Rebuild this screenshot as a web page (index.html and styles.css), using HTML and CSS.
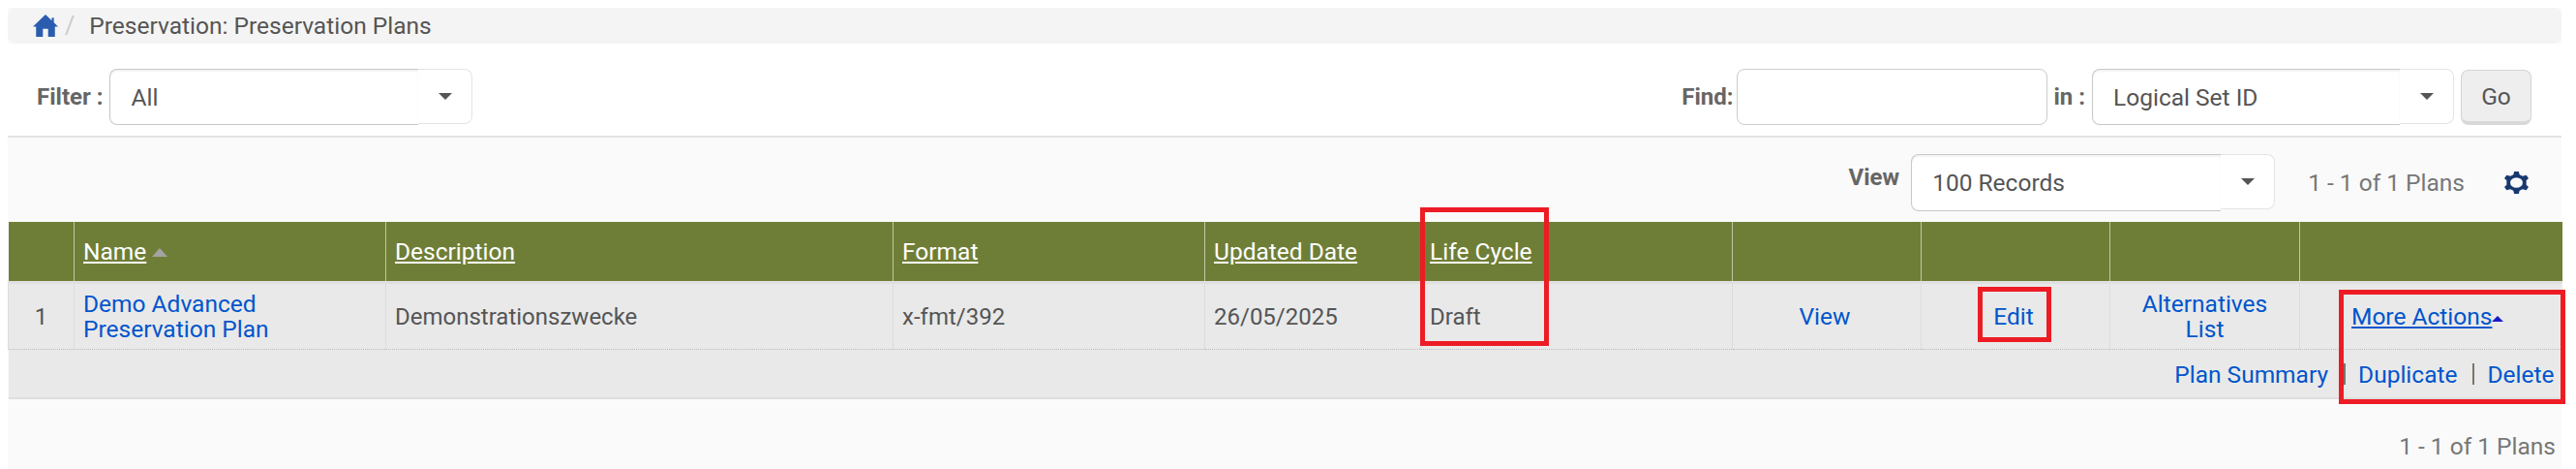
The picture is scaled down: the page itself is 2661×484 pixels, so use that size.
FILE: index.html
```html
<!DOCTYPE html>
<html lang="en">
<head>
  <meta charset="UTF-8" />
  <title>Preservation Plans</title>
  <link rel="stylesheet" href="styles.css">
</head>
<body>
  <div class="page">
    <div class="breadcrumb">
      <svg class="home-icon" viewBox="1 1 24 22" preserveAspectRatio="none"><path d="M13 1 L1 13 L4 13 L4 23 L10.5 23 L10.5 15 L15.5 15 L15.5 23 L22 23 L22 13 L25 13 L21 9 L21 4 L19 4 L19 7 Z"/></svg>
      <span class="crumb-sep">/</span>
      <span class="crumb-text">Preservation: Preservation Plans</span>
    </div>

    <div class="filter-bar">
      <label class="bar-label filter-label">Filter :</label>
      <div class="select select-filter">
        <div class="select-value">All</div>
        <div class="select-caret"><span class="caret"></span></div>
      </div>
      <div class="spacer"></div>
      <label class="bar-label">Find:</label>
      <input class="find-input" type="text" />
      <label class="bar-label in-label">in :</label>
      <div class="select select-in">
        <div class="select-value">Logical Set ID</div>
        <div class="select-caret"><span class="caret"></span></div>
      </div>
      <button class="go-btn">Go</button>
    </div>

    <div class="view-bar">
      <label class="bar-label view-label">View</label>
      <div class="select select-view">
        <div class="select-value">100 Records</div>
        <div class="select-caret"><span class="caret"></span></div>
      </div>
      <span class="count">1 - 1 of 1 Plans</span>
      <svg class="gear-icon" viewBox="1.4 0 21.2 24" preserveAspectRatio="none"><path fill-rule="evenodd" d="M10 0 H14 L14.7 3.4 L17.3 4.9 L20.6 3.8 L22.6 7.2 L20.6 9.6 V14.4 L22.6 16.8 L20.6 20.2 L17.3 19.1 L14.7 20.6 L14 24 H10 L9.3 20.6 L6.7 19.1 L3.4 20.2 L1.4 16.8 L3.4 14.4 V9.6 L1.4 7.2 L3.4 3.8 L6.7 4.9 L9.3 3.4 Z M12 6.5 A5.5 5.5 0 1 0 12 17.5 A5.5 5.5 0 1 0 12 6.5 Z"/></svg>
    </div>

    <table class="plans">
      <colgroup>
        <col class="c-num"><col class="c-name"><col class="c-desc"><col class="c-format"><col class="c-date"><col class="c-life"><col class="c-view"><col class="c-edit"><col class="c-alt"><col class="c-more">
      </colgroup>
      <thead>
        <tr>
          <th></th>
          <th><a href="#">Name</a><span class="sort-up"></span></th>
          <th><a href="#">Description</a></th>
          <th><a href="#">Format</a></th>
          <th><a href="#">Updated Date</a></th>
          <th><a href="#">Life Cycle</a></th>
          <th></th>
          <th></th>
          <th></th>
          <th></th>
        </tr>
      </thead>
      <tbody>
        <tr class="main-row">
          <td class="num">1</td>
          <td><a href="#">Demo Advanced Preservation Plan</a></td>
          <td>Demonstrationszwecke</td>
          <td>x-fmt/392</td>
          <td>26/05/2025</td>
          <td>Draft</td>
          <td class="center"><a href="#">View</a></td>
          <td class="center"><a href="#">Edit</a></td>
          <td class="alt-cell"><a href="#">Alternatives List</a></td>
          <td class="more-cell"><a class="more-link" href="#">More Actions</a><span class="more-arrow"></span></td>
        </tr>
        <tr class="actions-row">
          <td colspan="10">
            <div class="actions">
              <a href="#">Plan Summary</a>
              <span class="action-sep"></span>
              <a href="#">Duplicate</a>
              <span class="action-sep"></span>
              <a href="#">Delete</a>
            </div>
          </td>
        </tr>
      </tbody>
    </table>

    <div class="footer-count">1 - 1 of 1 Plans</div>

    <div class="mark mark-life"></div>
    <div class="mark mark-edit"></div>
    <div class="mark mark-more"></div>
  </div>
</body>
</html>
```

FILE: styles.css
```css
* {
  box-sizing: border-box;
}
html, body {
  margin: 0;
  background: #fff;
}
body {
  font-family: Roboto, Arial, sans-serif;
  font-size: 24px;
  color: #555;
  height: 484px;
  overflow: hidden;
}
a {
  color: #0055cc;
  text-decoration: none;
}
.page {
  position: relative;
  margin: 8px 15px 0 8px;
  height: 476px;
  background: #fafafa;
}

/* breadcrumb */
.breadcrumb {
  display: flex;
  align-items: center;
  height: 37px;
  padding-left: 26px;
  background: #f4f4f4;
  border-radius: 8px;
}
.home-icon {
  width: 26px;
  height: 23px;
  fill: #2a5db0;
}
.crumb-sep {
  margin-left: 7px;
  font-size: 25px;
  color: #ccc;
}
.crumb-text {
  margin-left: 15px;
  font-size: 24.5px;
  color: #555;
}

/* filter row */
.filter-bar {
  display: flex;
  align-items: flex-start;
  height: 97px;
  padding: 26px 31px 0 30px;
  background: #fff;
  border-bottom: 2px solid #e2e2e2;
}
.spacer {
  flex: 1;
}
.bar-label {
  font-weight: 700;
  font-size: 24px;
  line-height: 58px;
  color: #666;
  white-space: nowrap;
}
.filter-label {
  margin-right: 7px;
}
.in-label {
  margin: 0 7px 0 6px;
}
.select {
  display: flex;
  height: 58px;
}
.select-filter {
  width: 375px;
}
.select-in {
  width: 374px;
}
.select-view {
  width: 376px;
  height: 59px;
}
.select-value {
  flex: 1;
  padding: 0 21px;
  font-size: 24.5px;
  line-height: 58px;
  background: #fff;
  border: 1px solid #c8c8c8;
  border-right: 0;
  border-radius: 8px 0 0 8px;
  color: #555;
  box-shadow: inset 0 2px 2px rgba(0,0,0,0.05);
}
.select-caret {
  display: flex;
  align-items: center;
  justify-content: center;
  width: 56px;
  height: 57px;
  background: #fff;
  border: 1px solid #e4e4e4;
  border-left: 0;
  border-radius: 0 8px 8px 0;
}
.caret {
  width: 0;
  height: 0;
  border-left: 7px solid transparent;
  border-right: 7px solid transparent;
  border-top: 7px solid #555;
}
.find-input {
  width: 321px;
  height: 58px;
  margin-left: 4px;
  border: 1px solid #ccc;
  border-radius: 8px;
  background: #fff;
}
.go-btn {
  width: 73px;
  height: 57px;
  margin: 1px 0 0 7px;
  font-family: inherit;
  font-size: 24.5px;
  color: #555;
  background: #eee;
  border: 1px solid #d4d4d4;
  border-bottom: 4px solid #d8d8d8;
  border-radius: 8px;
}

/* view row */
.view-bar {
  display: flex;
  align-items: flex-start;
  height: 87px;
  padding: 17px 34px 0 0;
  justify-content: flex-end;
}
.view-label {
  margin-right: 12px;
  line-height: 48px;
}
.count {
  margin-left: 34px;
  font-size: 24.5px;
  line-height: 60px;
  color: #777;
}
.gear-icon {
  width: 25px;
  height: 23px;
  margin: 18px 0 0 41px;
  fill: #17396f;
}

/* table */
.plans {
  width: 100%;
  table-layout: fixed;
  border-collapse: collapse;
}
.c-num { width: 68px; }
.c-name { width: 322px; }
.c-desc { width: 524px; }
.c-format { width: 322px; }
.c-date { width: 223px; }
.c-life { width: 322px; }
.c-view { width: 195px; }
.c-edit { width: 195px; }
.c-alt { width: 196px; }
.c-more { width: 271px; }
.plans th {
  height: 62px;
  padding: 0 9px;
  background: #6f7e36;
  border-left: 1px solid #c2c7a6;
  text-align: left;
  font-size: 24.5px;
  font-weight: 400;
}
.plans th:first-child {
  border-left: 0;
}
.plans th a {
  color: #fff;
  text-decoration: underline;
}
.sort-up {
  display: inline-block;
  width: 0;
  height: 0;
  margin-left: 6px;
  vertical-align: 3px;
  border-left: 8px solid transparent;
  border-right: 8px solid transparent;
  border-bottom: 9px solid #a3a3a3;
}
.main-row td {
  height: 69px;
  padding: 2px 9px 0;
  line-height: 25px;
  background: #e9e9e9;
  border-left: 1px solid #dcdcdc;
  border-top: 3px solid #e0e0e0;
  border-bottom: 1px dotted #bbb;
}
.main-row .num {
  text-align: center;
}
.main-row .center {
  padding-right: 13px;
  text-align: center;
}
.main-row .alt-cell {
  padding: 2px 30px 0;
  text-align: center;
}
.main-row .more-cell {
  padding-left: 53px;
}
.main-row a,
.actions a {
  font-size: 24.5px;
}
.more-link {
  text-decoration: underline;
}
.more-arrow {
  display: inline-block;
  width: 0;
  height: 0;
  vertical-align: 3px;
  border-left: 6px solid transparent;
  border-right: 6px solid transparent;
  border-bottom: 6px solid #1a1acc;
}
.actions-row td {
  height: 51px;
  padding: 2px 8px 0 0;
  background: #e9e9e9;
  border-bottom: 2px solid #dedede;
}
.actions {
  display: flex;
  justify-content: flex-end;
  align-items: center;
}
.action-sep {
  width: 2px;
  height: 22px;
  margin: 0 13px 0 16px;
  background: #7d7468;
}
.footer-count {
  padding: 34px 6px 0 0;
  text-align: right;
  font-size: 24.5px;
  color: #777;
}

/* red annotation boxes drawn over the screenshot */
.mark {
  position: absolute;
  border: 5px solid #ed1c24;
}
.mark-life {
  left: 1459px;
  top: 206px;
  width: 133px;
  height: 143px;
}
.mark-edit {
  left: 2035px;
  top: 288px;
  width: 76px;
  height: 57px;
}
.mark-more {
  left: 2408px;
  top: 291px;
  width: 234px;
  height: 118px;
}
```
